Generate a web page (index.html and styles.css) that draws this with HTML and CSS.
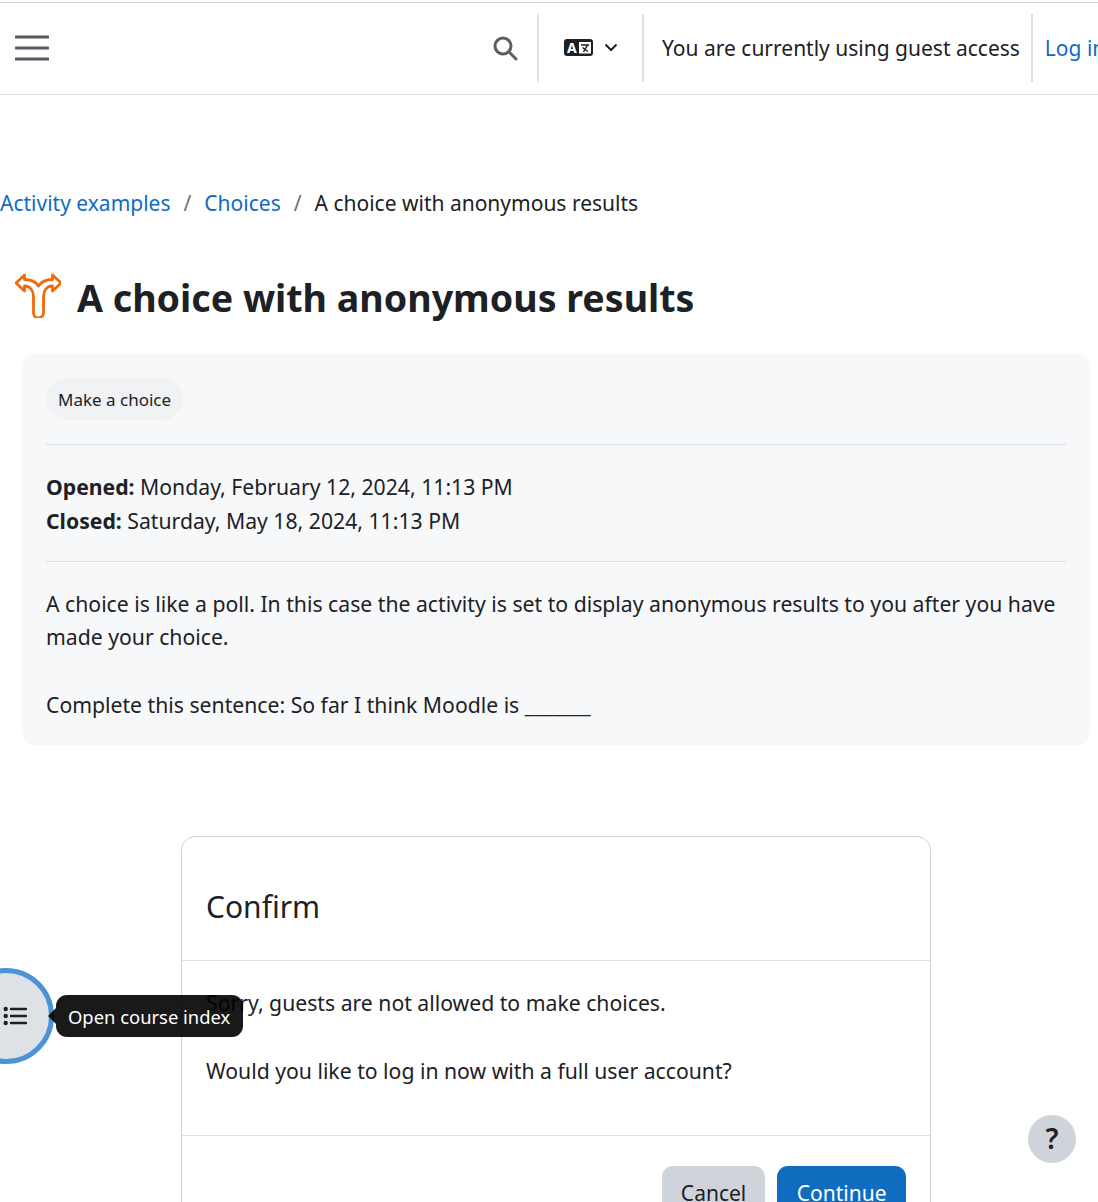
FILE: index.html
```html
<!DOCTYPE html>
<html lang="en">
<head>
  <meta charset="UTF-8">
  <title>A choice with anonymous results</title>
  <link rel="stylesheet" href="styles.css">
</head>
<body>
  <nav class="navbar">
    <svg class="burger" width="34" height="28" viewBox="0 0 34 28"><path d="M1 3h32M1 14h32M1 25h32" stroke="#555a60" stroke-width="3" stroke-linecap="round" fill="none"/></svg>
    <div class="nav-right">
      <svg class="search" width="26" height="26" viewBox="0 0 26 26"><circle cx="11" cy="11" r="8" stroke="#5a5f64" stroke-width="3" fill="none"/><path d="M17 17l7 7" stroke="#5a5f64" stroke-width="3" stroke-linecap="round"/></svg>
      <div class="nav-cell lang">
        <svg width="29" height="17" viewBox="0 0 29 17"><rect width="29" height="17" rx="3" fill="#1d2125"/><rect x="15" y="3" width="12" height="11.500" fill="#fff"/><text x="3" y="13.500" class="lang-a">A</text><path d="M17 6h8M23.500 6l-4 7M18.500 8.500l5.500 4" stroke="#1d2125" stroke-width="1.500" fill="none"/></svg>
        <svg width="14" height="9" viewBox="0 0 14 9"><path d="M1.500 1.500L7 7l5.500-5.500" stroke="#1d2125" stroke-width="2" fill="none"/></svg>
      </div>
      <div class="nav-cell guest">You are currently using guest access</div>
      <div class="nav-cell login"><a href="#">Log in</a></div>
    </div>
  </nav>

  <main class="page">
    <ol class="breadcrumb">
      <li><a href="#">Activity examples</a></li>
      <li class="sep">/</li>
      <li><a href="#">Choices</a></li>
      <li class="sep">/</li>
      <li>A choice with anonymous results</li>
    </ol>

    <div class="title-row">
      <svg width="46" height="46" viewBox="0 0 46 46"><path d="M18.500 41V25c0-6-3-11-9-11V19L1 11l8.500-8v4.500c5 0 11 2 14 6.500 3-4.500 9-6.500 14-6.500V3L46 11l-8.500 8v-5c-6 0-9 5-9 11v16a5 5 0 0 1-10 0z" fill="none" stroke="#f16a08" stroke-width="2.800" stroke-linejoin="round"/></svg>
      <h1>A choice with anonymous results</h1>
    </div>

    <section class="activity">
      <span class="pill">Make a choice</span>
      <hr>
      <div class="dates">
        <div><strong>Opened:</strong> Monday, February 12, 2024, 11:13 PM</div>
        <div><strong>Closed:</strong> Saturday, May 18, 2024, 11:13 PM</div>
      </div>
      <hr class="hr-after-dates">
      <p>A choice is like a poll. In this case the activity is set to display anonymous results to you after you have made your choice.</p>
      <p class="last">Complete this sentence: So far I think Moodle is _______</p>
    </section>

    <section class="confirm">
      <h2>Confirm</h2>
      <div class="confirm-body">
        <p>Sorry, guests are not allowed to make choices.</p>
        <p class="last">Would you like to log in now with a full user account?</p>
      </div>
      <div class="confirm-foot">
        <button class="btn btn-grey">Cancel</button>
        <button class="btn btn-blue">Continue</button>
      </div>
    </section>
  </main>

  <div class="index-toggle">
    <svg width="24" height="20" viewBox="0 0 24 20"><path d="M8 3h15M8 10h15M8 17h15" stroke="#1d2125" stroke-width="2.400" stroke-linecap="round"/><circle cx="2.700" cy="3" r="2.200" fill="#1d2125"/><circle cx="2.700" cy="10" r="2.200" fill="#1d2125"/><circle cx="2.700" cy="17" r="2.200" fill="#1d2125"/></svg>
  </div>
  <div class="tooltip">Open course index</div>
  <div class="help">?</div>
</body>
</html>
```

FILE: styles.css
```css
html, body {
  margin: 0;
  padding: 0;
  height: 1202px;
  overflow: hidden;
  background: #fff;
}
body {
  font-family: "Noto Sans", sans-serif;
  font-size: 21px;
  line-height: 33.75px;
  color: #1d2125;
  position: relative;
}
a {
  color: #0f6cbf;
  text-decoration: none;
}
.navbar {
  display: flex;
  align-items: center;
  height: 91px;
  margin-top: 2px;
  border-top: 1px solid #d0d0d0;
  border-bottom: 1px solid #dee2e6;
  overflow: hidden;
}
.burger {
  margin-left: 15px;
  margin-bottom: 2px;
  flex: none;
}
.nav-right {
  display: flex;
  align-items: center;
  height: 68px;
  margin-left: 443px;
  margin-top: -2px;
  white-space: nowrap;
  flex: none;
}
.search {
  margin-right: 19px;
}
.nav-cell {
  height: 68px;
  display: flex;
  align-items: center;
  border-left: 2px solid #dee2e6;
}
.lang {
  gap: 11px;
  padding: 0 24px 0 25px;
}
.guest {
  height: 65px;
  padding: 3px 11px 0 18px;
}
.login {
  height: 65px;
  padding: 3px 0 0 12px;
}
.lang-a {
  font-family: "Noto Sans", sans-serif;
  font-size: 14px;
  font-weight: 700;
  fill: #fff;
}
.page {
  padding: 92px 8px 0 0;
}
.breadcrumb {
  display: flex;
  gap: 13px;
  list-style: none;
  margin: 0;
  padding: 0;
}
.sep {
  color: #6a737b;
}
.title-row {
  display: flex;
  align-items: flex-start;
  gap: 16px;
  margin: 51px 0 0 15px;
}
h1 {
  margin: 1px 0 0;
  font-size: 37.6px;
  line-height: 50px;
  font-weight: 700;
}
.activity {
  margin: 31px 0 0 22px;
  padding: 24px 24px 23px;
  font-size: 21.2px;
  background: #f7f8fa;
  border-radius: 14px;
}
.pill {
  display: inline-block;
  padding: 5px 12px 3px;
  font-size: 17px;
  background: #f1f2f4;
  border-radius: 22px;
}
hr {
  border: 0;
  border-top: 1px solid #dcdfe3;
  margin: 24px 0 25px;
}
hr.hr-after-dates {
  margin: 23px 0 25px;
}
.dates {
  line-height: 34px;
}
p {
  margin: 0 0 33.75px;
}
p.last {
  margin-bottom: 0;
}
.confirm {
  width: 748px;
  margin: 91px 0 0 181px;
  border: 1px solid #ced4da;
  border-radius: 14px;
  background: #fff;
}
h2 {
  margin: 0;
  padding: 44px 24px 28px;
  font-size: 30px;
  line-height: 51px;
  font-weight: 400;
  border-bottom: 1px solid #dee2e6;
}
.confirm-body {
  padding: 25px 24px 47px;
  font-size: 21.2px;
  line-height: 34px;
  border-bottom: 1px solid #dee2e6;
}
.confirm-body p {
  margin-bottom: 34px;
}
.confirm-body p.last {
  margin-bottom: 0;
}
.confirm-foot {
  display: flex;
  justify-content: flex-end;
  gap: 12px;
  padding: 30px 24px 24px;
}
.btn {
  font: inherit;
  height: 54px;
  padding: 3px 19px 0;
  border: 0;
  border-radius: 11px;
}
.btn-grey {
  background: #ced4da;
  color: #1d2125;
}
.btn-blue {
  padding: 3px 19.5px 0;
  background: #0f6cbf;
  color: #fff;
}
.index-toggle {
  position: absolute;
  left: -42px;
  top: 968px;
  width: 96px;
  height: 96px;
  box-sizing: border-box;
  border: 5px solid #4a93d6;
  border-radius: 50%;
  background: #dee2e6;
  display: flex;
  align-items: center;
  justify-content: flex-end;
  padding-right: 22px;
}
.tooltip {
  position: absolute;
  left: 56px;
  top: 995px;
  width: 163px;
  height: 42px;
  line-height: 44px;
  padding: 0 12px;
  font-size: 18.4px;
  white-space: nowrap;
  color: #fff;
  background: rgba(0, 0, 0, 0.9);
  border-radius: 11px;
}
.tooltip::before {
  content: "";
  position: absolute;
  left: -8px;
  top: 13px;
  border: 8px solid transparent;
  border-left: 0;
  border-right-color: rgba(0, 0, 0, 0.9);
}
.help {
  position: absolute;
  left: 1028px;
  top: 1115px;
  width: 48px;
  height: 48px;
  border-radius: 50%;
  background: #ced4da;
  text-align: center;
  font-size: 28px;
  font-weight: 600;
  line-height: 47px;
}
```
